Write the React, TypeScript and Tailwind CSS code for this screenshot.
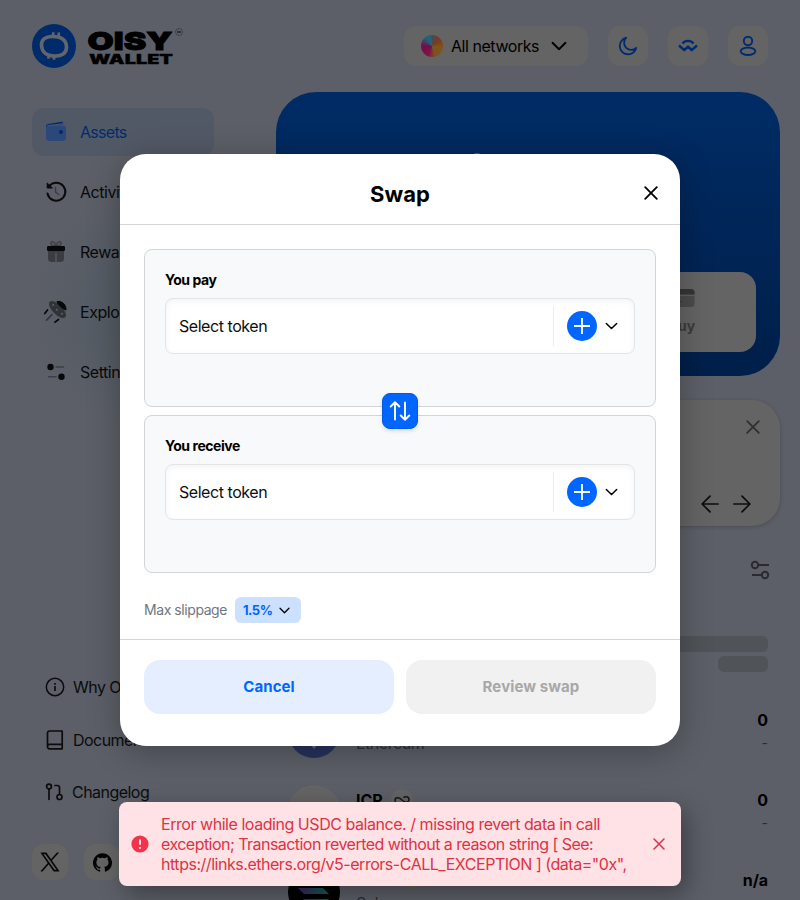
import React from "react";

type IconProps = { className?: string };

const Chevron = ({ className = "" }: IconProps) => (
  <svg viewBox="0 0 16 10" fill="none" stroke="currentColor" className={className}>
    <path d="M1.5 1.8 8 8.2 14.5 1.8" strokeWidth="1.9" strokeLinecap="round" strokeLinejoin="round" />
  </svg>
);

const Cross = ({ className = "" }: IconProps) => (
  <svg viewBox="0 0 14 14" fill="none" stroke="currentColor" className={className}>
    <path d="M1.2 1.2 12.8 12.8M12.8 1.2 1.2 12.8" strokeWidth="1.8" strokeLinecap="round" />
  </svg>
);

const Arrow = ({ className = "" }: IconProps) => (
  <svg viewBox="0 0 18 18" fill="none" stroke="currentColor" className={className}>
    <path d="M.8 9h16M9 1.2 16.9 9 9 16.8" strokeWidth="1.7" strokeLinecap="round" strokeLinejoin="round" />
  </svg>
);

function Logo() {
  return (
    <svg className="h-[44px] w-[152px]" viewBox="0 0 152 44">
      <circle cx="22" cy="22" r="22" fill="#002b6b" />
      <path
        d="M19.500 12.500c-6.500.2-10 3.600-10 8.300 0 6 3.800 11 12.500 11.300 8 .3 12.500-2.700 12.500-8.800 0-7.500-5.500-11.100-15-10.800Z"
        fill="none" stroke="#62666c" strokeWidth="3.600"
      />
      <path d="M21.200 12.500V8.300M26.800 13V8.600M16.500 31v3.800M22 32v3.800" stroke="#62666c" strokeWidth="2.600" />
      <text x="55.500" y="25.800" textLength="85" lengthAdjust="spacingAndGlyphs" className="fill-black stroke-black font-['Inter',sans-serif] text-[25px] font-black" strokeWidth="0.900">OISY</text>
      <text x="57" y="39.700" textLength="84" lengthAdjust="spacingAndGlyphs" className="fill-black stroke-black font-['Inter',sans-serif] text-[13px] font-black" strokeWidth="0.300">WALLET</text>
      <circle cx="147" cy="8" r="3.500" fill="none" stroke="#333539" strokeWidth="0.700" />
      <path d="M145 8h4" stroke="#222" strokeWidth="1.500" />
    </svg>
  );
}

const WalletIcon = () => (
  <svg className="size-6" viewBox="0 0 24 24">
    <path d="M2 6.500C2 4.800 3 4.300 4.500 4l13-2.200c1-.1 1.600.5 1.700 1.500v.9L5 5.500C3.500 5.800 2.600 6.200 2 8Z" fill="#00296a" />
    <rect x="2" y="5.500" width="20" height="15.500" rx="3" fill="#2b4978" />
    <path d="M3 5.800 19 3.600" stroke="#54606f" strokeWidth="0.800" />
    <circle cx="17" cy="12" r="2" fill="#00296a" />
  </svg>
);

const HistoryIcon = () => (
  <svg className="size-6" viewBox="0 0 24 24" fill="none">
    <path d="M3.500 13.500A9 9 0 1 0 5.200 6.200" stroke="#090a0c" strokeWidth="2" strokeLinecap="round" />
    <path d="M3.200 3v5h5.200Z" fill="#090a0c" stroke="#090a0c" strokeLinejoin="round" />
    <path d="M11.500 7.500v4.700l3.300 2.300" stroke="#393c41" strokeWidth="1.500" strokeLinecap="round" />
  </svg>
);

const GiftIcon = () => (
  <svg className="size-6" viewBox="0 0 24 24" fill="none">
    <path d="M11.500 5.500C8 6 6.500 4.500 7 2.800c.7-2 4.300-1 4.500 2.700Zm1 0c3.500.5 5-1 4.500-2.700-.7-2-4.300-1-4.500 2.700Z" stroke="#393c41" strokeWidth="1.300" />
    <path d="M4 11h16v7.500a3.500 3.500 0 0 1-3.500 3.500h-9A3.500 3.500 0 0 1 4 18.500Z" fill="#393c41" />
    <rect x="3" y="6" width="18" height="5" rx="1.200" fill="#070809" />
    <path d="M12 12.500V22" stroke="#62656b" strokeWidth="1" />
  </svg>
);

const RocketIcon = () => (
  <svg className="size-6" viewBox="0 0 24 24" fill="none">
    <ellipse cx="13.500" cy="9.500" rx="11" ry="4.800" transform="rotate(45 13.500 9.500)" fill="#303439" />
    <path d="M13 1.500c5-1 9.500 3.500 9 8.500-3.500-1-8-5-9-8.500Z" fill="#070809" stroke="#070809" strokeLinejoin="round" />
    <circle cx="9.200" cy="5" r="1" fill="#5a616a" /><circle cx="12.800" cy="9.800" r="1" fill="#5a616a" /><circle cx="18" cy="13.700" r="1" fill="#5a616a" />
    <path d="M3.500 10 .8 13.500M14.500 19.500l-3.500 2.700" stroke="#070809" strokeWidth="1.700" strokeLinecap="round" />
    <path d="m8 14.500-5.500 5.700" stroke="#303439" strokeWidth="1.600" strokeLinecap="round" />
  </svg>
);

const SlidersIcon = () => (
  <svg className="size-6" viewBox="0 0 24 24" fill="none">
    <path d="M12 7h7.500M4.500 16.700H12" stroke="#3b4047" strokeWidth="1.500" strokeLinecap="round" />
    <circle cx="6.500" cy="7" r="3.200" fill="#070809" />
    <circle cx="17.500" cy="16.700" r="3.200" fill="#070809" />
  </svg>
);

const nav = [
  { label: "Activity", icon: <HistoryIcon /> },
  { label: "Rewards", icon: <GiftIcon /> },
  { label: "Explore", icon: <RocketIcon /> },
  { label: "Settings", icon: <SlidersIcon /> },
];

function Sidebar() {
  return (
    <aside className="flex w-[182px] flex-col">
      <nav className="flex flex-col gap-3 tracking-[-0.46px] text-[#090a0b]">
        <a className="flex h-12 items-center gap-3 rounded-xl bg-[#525966] px-3 tracking-[-0.7px] text-[#002c6e]">
          <WalletIcon />Assets
        </a>
        {nav.map((n) => (
          <a key={n.label} className="flex h-12 items-center gap-3 px-3">{n.icon}{n.label}</a>
        ))}
      </nav>
      <div className="mt-[264px] flex flex-col pl-3 tracking-[-0.54px] text-[#0b0c0d]">
        <a className="flex h-[53px] items-center gap-[7px] whitespace-nowrap">
          <svg className="size-[22px]" viewBox="0 0 22 22" fill="none" stroke="currentColor" strokeWidth="1.500">
            <circle cx="11" cy="11" r="8.700" /><path d="M11 10v5M11 7v1.700" strokeWidth="1.700" />
          </svg>
          Why OISY?
        </a>
        <a className="flex h-[53px] items-center gap-[7px]">
          <svg className="size-[22px]" viewBox="0 0 22 22" fill="none" stroke="currentColor" strokeWidth="1.700" strokeLinejoin="round">
            <path d="M3.500 17.500V4.200C3.500 2.800 4.300 2 5.700 2h12.500v17.800H5.700c-1.400 0-2.200-.9-2.200-2.300 0-1.400.8-2.200 2.200-2.200h12.500" />
          </svg>
          Documents
        </a>
        <a className="flex h-[51px] items-center gap-[6px]">
          <svg className="size-[22px]" viewBox="0 0 22 22" fill="none" stroke="currentColor" strokeWidth="1.700" strokeLinecap="round">
            <circle cx="5" cy="5.500" r="2.400" /><path d="M5 8v10.300M11 4.500h2.300c1.400 0 2.200.9 2.200 2.200v6" /><circle cx="15.500" cy="16" r="2.500" />
          </svg>
          Changelog
        </a>
      </div>
      <div className="mt-[27px] flex gap-4">
        <span className="flex size-9 items-center justify-center rounded-xl bg-[#646464]">
          <svg className="size-5" viewBox="0 0 24 24"><path fill="#030303" stroke="#030303" strokeWidth="0.500" d="M14.095 10.316 22.286 1h-1.940L13.230 9.088 7.551 1H1l8.590 12.231L1 23h1.940l7.510-8.543L16.449 23H23ZM11.436 13.339l-.871-1.219L3.640 2.432h2.980l5.590 7.821.869 1.219 7.265 10.166h-2.982Z" /></svg>
        </span>
        <span className="flex size-9 items-center justify-center rounded-xl bg-[#646464]">
          <svg className="size-[19px]" viewBox="0 0 24 24"><path fill="#030303" d="M12 .3a12 12 0 0 0-3.800 23.400c.6.1.8-.3.8-.6v-2c-3.300.7-4-1.600-4-1.600-.6-1.400-1.400-1.800-1.400-1.800-1-.7.1-.7.1-.7 1.200 0 1.900 1.200 1.900 1.200 1 1.800 2.800 1.300 3.500 1 0-.8.4-1.300.7-1.600-2.700-.3-5.500-1.300-5.500-6 0-1.200.5-2.300 1.300-3.100-.2-.4-.6-1.600 0-3.200 0 0 1-.3 3.400 1.200a11.500 11.500 0 0 1 6 0c2.300-1.500 3.300-1.200 3.300-1.200.6 1.600.2 2.800 0 3.200.9.8 1.300 1.900 1.300 3.200 0 4.600-2.800 5.600-5.500 5.900.5.400.9 1 .9 2.200v3.300c0 .3.100.7.800.6A12 12 0 0 0 12 .3" /></svg>
        </span>
      </div>
    </aside>
  );
}

function Header() {
  return (
    <header className="flex h-[44px] items-center justify-between px-8">
      <Logo />
      <div className="flex items-center gap-5">
        <div className="flex h-10 w-[184px] items-center rounded-xl bg-[#646464] pl-[17px] text-black">
          <span className="size-[22px] rounded-full bg-[conic-gradient(from_0deg,#4b4a4c,#7d3a20_50deg,#7e5518_100deg,#7b5324_160deg,#7a1646_200deg,#780b4b_270deg,#216078_320deg,#25647c_350deg,#4b4a4c)]" />
          <span className="ml-2 w-[100px] tracking-[-0.45px]">All networks</span>
          <Chevron className="h-[10px] w-4" />
        </div>
        <span className="flex size-10 items-center justify-center rounded-xl bg-[#646464]">
          <svg className="size-5" viewBox="0 0 20 20" fill="none" stroke="#002c6e" strokeWidth="1.800" strokeLinejoin="round">
            <path d="M8.200 1.700A8.400 8.400 0 1 0 18.300 11.800 6.800 6.800 0 0 1 8.200 1.700Z" />
          </svg>
        </span>
        <span className="flex size-10 items-center justify-center rounded-xl bg-[#646464]">
          <svg className="size-5" viewBox="0 0 20 20" fill="none" stroke="#002c6e" strokeWidth="2.400" strokeLinejoin="round">
            <path d="M4.500 7.400C7.200 4 12.800 4 15.500 7.400M1 9.500l5.300 4.700L10 10.500l3.700 3.700L19 9.500" />
          </svg>
        </span>
        <span className="flex size-10 items-center justify-center rounded-xl bg-[#646464]">
          <svg className="size-5" viewBox="0 0 20 20" fill="none" stroke="#002c6e" strokeWidth="1.900">
            <circle cx="10" cy="5" r="4.200" /><ellipse cx="10" cy="15.300" rx="7.300" ry="3.700" />
          </svg>
        </span>
      </div>
    </header>
  );
}

function TokenRow({ name, network, logo, amount, badge }: { name: string; network: string; logo: React.ReactNode; amount: string; badge: React.ReactNode }) {
  return (
    <div className="flex h-20 items-center pl-3 pr-3">
      {logo}
      <div className="ml-4 flex flex-1 flex-col pb-0.5">
        <div className="flex h-6 items-center gap-2 font-bold text-black">{name}{badge}</div>
        <span className="h-[22px] leading-[22px] tracking-[-0.5px] text-[#2c2e32]">{network}</span>
      </div>
      <div className="flex flex-col pb-0.5 text-right">
        <span className="h-6 font-bold tracking-[-0.1px] text-black">{amount}</span>
        <span className="h-[22px] text-sm leading-[22px] text-[#2c2e32]">-</span>
      </div>
    </div>
  );
}

function MainColumn() {
  return (
    <main className="ml-[62px] flex w-[504px] flex-col">
      <section className="relative flex h-[284px] items-end justify-end rounded-[40px] bg-linear-to-b from-[#002c66] to-[#001f49] p-6">
        <span className="absolute left-[198px] top-[61px] h-1 w-[6px] rounded-full bg-[#5d6878]" />
        <div className="flex h-20 w-[148px] flex-col items-center justify-center gap-2 rounded-2xl bg-[#646464] text-sm font-bold text-[#3b3b3b]">
          <svg className="h-[19px] w-[25px]" viewBox="0 0 24 19">
            <rect x="0" y="0" width="24" height="18" rx="3.500" fill="#4b4b4b" />
            <path d="M3.500 0h17A3.500 3.500 0 0 1 24 3.500V5.500H0v-2A3.500 3.500 0 0 1 3.500 0Z" fill="#353535" />
            <path d="M0 6.300h24" stroke="#646464" /><path d="M4 12.500h7" stroke="#353535" />
          </svg>
          Buy
        </div>
      </section>
      <section className="mt-6 flex h-[126px] flex-col items-end justify-between rounded-[28px] bg-[#646464] pb-[13px] pr-[20px] pt-[20px] shadow-[0_1px_4px_rgba(0,0,0,0.2)]">
        <Cross className="size-[14px] text-[#303030]" />
        <div className="mr-[9px] flex gap-[14px] text-[#0c0c0c]">
          <Arrow className="size-[18px] rotate-180" />
          <Arrow className="size-[18px]" />
        </div>
      </section>
      <div className="mt-[34px] flex justify-end pr-[10px]">
        <svg className="size-5" viewBox="0 0 20 20" fill="none" stroke="#292b2f" strokeWidth="2">
          <circle cx="5" cy="5" r="3.200" /><path d="M8.500 5H19M2 15h9.500" /><circle cx="15" cy="15" r="3.200" />
        </svg>
      </div>
      <div className="mt-14 flex flex-col items-end gap-1 pr-3">
        <span className="h-4 w-[140px] rounded-md bg-[#505357]" />
        <span className="h-4 w-[50px] rounded-md bg-[#505357]" />
      </div>
      <div className="mt-5">
        <TokenRow name="ETH" network="Ethereum" amount="0" badge={null} logo={
          <svg className="size-[52px]" viewBox="0 0 52 52"><circle cx="26" cy="26" r="26" fill="#27325d" /><path d="m26 8 11 18-11 7-11-7Zm0 35L15 28l11 7 11-7Z" fill="#666a78" /></svg>
        } />
        <TokenRow name="ICP" network="Internet Computer" amount="0" badge={
          <span className="flex size-[22px] items-center justify-center rounded-full bg-[#626466]">
            <svg className="h-3 w-4" viewBox="0 0 16 12" fill="none" stroke="#171717" strokeWidth="1.500"><path d="M6 8.500C4.500 10 1 9.500 1 6.500S4.500 2.500 8 6s7 2.500 7-.5S11 2 9.500 3.800" /></svg>
          </span>
        } logo={<span className="size-[52px] rounded-full bg-[#646464] shadow-[0_0_1px_#777]" />} />
        <TokenRow name="SOL" network="Solana" amount="n/a" badge={<span className="ml-1 size-[20px] rounded-full bg-[#61605a]" />} logo={
          <svg className="size-[52px]" viewBox="0 0 52 52">
            <defs><linearGradient id="sol" x1="0" x2="1"><stop stopColor="#422067" /><stop offset="1" stopColor="#0b614f" /></linearGradient></defs>
            <circle cx="26" cy="26" r="26" fill="#000" />
            <path d="M10 22h25l6 6H16ZM16 33h25l-6 6H10Z" fill="url(#sol)" />
          </svg>
        } />
      </div>
    </main>
  );
}

function TokenPanel({ label }: { label: string }) {
  return (
    <div className="h-[158px] rounded-lg border border-[#d2d4d5] bg-[#f8f9fb] px-5 pt-5">
      <p className="h-7 text-sm font-bold leading-5 tracking-[-0.46px] text-black">{label}</p>
      <div className="flex h-14 items-center rounded-lg border border-[#e4e5e6] bg-white pl-[13px] pr-4 shadow-[inset_0_2px_6px_rgba(0,0,0,0.05)]">
        <span className="flex-1 tracking-[-0.45px] text-[#0e0f10]">Select token</span>
        <span className="h-10 w-px bg-[#ececed]" />
        <span className="ml-[13px] flex size-[30px] items-center justify-center rounded-full bg-[#0066ff]">
          <svg className="size-4" viewBox="0 0 16 16" stroke="#fff" strokeWidth="1.800"><path d="M8 0v16M0 8h16" /></svg>
        </span>
        <Chevron className="ml-2 h-2 w-[13px] text-black" />
      </div>
    </div>
  );
}

function SwapModal() {
  return (
    <div className="absolute left-[120px] top-[154px] flex h-[592px] w-[560px] flex-col rounded-[26px] bg-white shadow-[0_6px_32px_rgba(0,0,0,0.28)]">
      <div className="flex h-[71px] items-center border-b border-[#d2d4d5] px-[22px] pt-2">
        <span className="size-[14px]" />
        <h2 className="flex-1 pt-0.5 text-center text-[22px] font-bold tracking-[0.07px] text-black">Swap</h2>
        <Cross className="size-[14px] text-black" />
      </div>
      <div className="relative flex flex-col gap-2 px-6 pt-6">
        <TokenPanel label="You pay" />
        <TokenPanel label="You receive" />
        <button className="absolute left-[262px] top-[168px] flex size-9 items-center justify-center rounded-lg border border-[#005be6] bg-[#0066ff] shadow-[0_2px_4px_rgba(0,0,0,0.12)]">
          <svg className="size-[22px]" viewBox="0 0 22 22" fill="none" stroke="#fff" strokeWidth="1.900" strokeLinecap="round" strokeLinejoin="round">
            <path d="M6 19.500V2.500M1.700 6.500 6 2.300l4.300 4.200M16 2.500v17M11.700 15.500l4.300 4.200 4.300-4.200" />
          </svg>
        </button>
      </div>
      <div className="mt-6 flex h-[26px] items-center gap-2 px-6">
        <span className="text-sm tracking-[-0.43px] text-[#70767d]">Max slippage</span>
        <span className="flex h-[26px] w-[66px] items-center justify-between rounded-md bg-[#cce0ff] pl-2 pr-[11px]">
          <span className="pt-px text-[13px] font-bold tracking-[-0.5px] text-[#0066ff]">1.5%</span>
          <Chevron className="h-[7px] w-[11px] text-black" />
        </span>
      </div>
      <div className="mt-4 flex gap-3 border-t border-[#d2d4d5] px-6 pt-5 font-bold">
        <button className="h-[54px] flex-1 rounded-2xl bg-[#e5eeff] text-[15px] tracking-[0.1px] text-[#0066ff]">Cancel</button>
        <button className="h-[54px] flex-1 rounded-2xl bg-[#f1f1f1] text-[15px] tracking-[0.1px] text-[#a8a8a8]">Review swap</button>
      </div>
    </div>
  );
}

function Toast() {
  return (
    <div className="absolute left-[119px] top-[802px] flex h-[84px] w-[562px] items-center rounded-lg bg-[#ffe2e5] px-3 text-[#dc3345] shadow-[6px_8px_24px_rgba(0,0,0,0.35)]">
      <svg className="size-[18px]" viewBox="0 0 18 18"><circle cx="9" cy="9" r="8.600" fill="#f2334c" /><path d="M9 4.500v5.300M9 12v1.800" stroke="#ffe2e5" strokeWidth="2" /></svg>
      <div className="ml-3 flex-1 whitespace-nowrap pb-px leading-5">
        <p className="tracking-[-0.454px]">Error while loading USDC balance. / missing revert data in call</p>
        <p className="tracking-[-0.54px]">exception; Transaction reverted without a reason string [ See:</p>
        <p className="tracking-[-0.47px]">https://links.ethers.org/v5-errors-CALL_EXCEPTION ] (data="0x",</p>
      </div>
      <Cross className="mr-1 size-3" />
    </div>
  );
}

export default function App() {
  return (
    <div className="relative h-[900px] w-[800px] overflow-hidden bg-[#5c5f67] bg-[radial-gradient(circle_at_150px_310px,#505962_0px,#565c65_60px,#5c5f67_120px)] pt-6 font-['Inter',sans-serif] text-base">
      <Header />
      <div className="mt-6 flex pl-8">
        <div className="pt-4"><Sidebar /></div>
        <MainColumn />
      </div>
      <SwapModal />
      <Toast />
    </div>
  );
}
